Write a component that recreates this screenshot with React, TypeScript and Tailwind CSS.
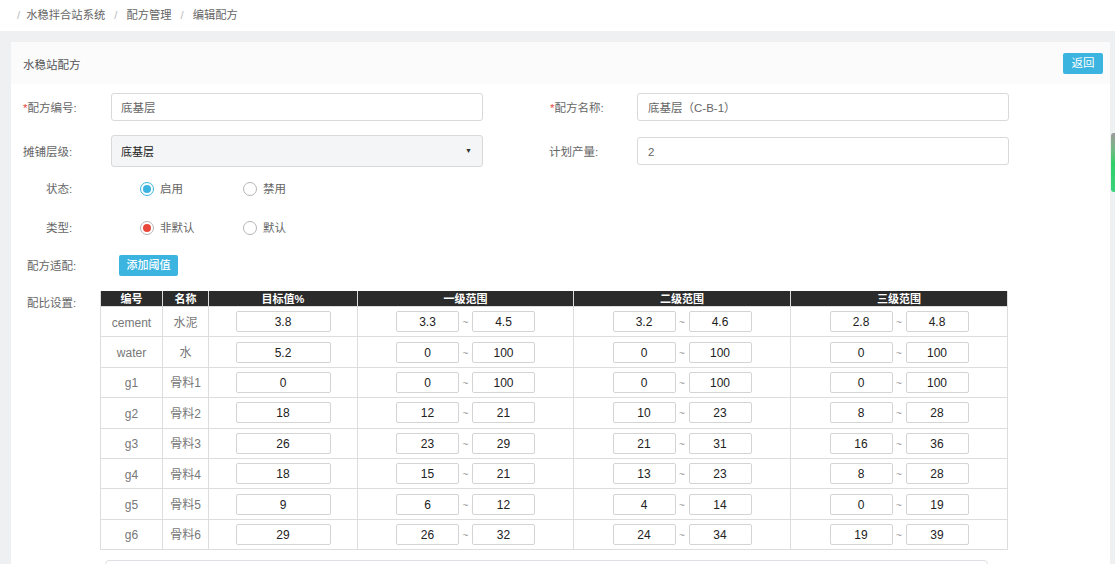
import React from "react";

const FONT = { fontFamily: '"Liberation Sans", "Noto Sans CJK SC", Arial, sans-serif' };

type Row = { code: string; name: string; target: string; r: [string, string][] };

const rows: Row[] = [
  { code: "cement", name: "水泥", target: "3.8", r: [["3.3", "4.5"], ["3.2", "4.6"], ["2.8", "4.8"]] },
  { code: "water", name: "水", target: "5.2", r: [["0", "100"], ["0", "100"], ["0", "100"]] },
  { code: "g1", name: "骨料1", target: "0", r: [["0", "100"], ["0", "100"], ["0", "100"]] },
  { code: "g2", name: "骨料2", target: "18", r: [["12", "21"], ["10", "23"], ["8", "28"]] },
  { code: "g3", name: "骨料3", target: "26", r: [["23", "29"], ["21", "31"], ["16", "36"]] },
  { code: "g4", name: "骨料4", target: "18", r: [["15", "21"], ["13", "23"], ["8", "28"]] },
  { code: "g5", name: "骨料5", target: "9", r: [["6", "12"], ["4", "14"], ["0", "19"]] },
  { code: "g6", name: "骨料6", target: "29", r: [["26", "32"], ["24", "34"], ["19", "39"]] },
];

function Cell({ v, w }: { v: string; w: string }) {
  return (
    <div
      className={`${w} h-[21px] border border-[#d4d4d4] rounded-[2px] bg-white flex items-center justify-center pt-[1px] text-[12px] text-[#222]`}
    >
      {v}
    </div>
  );
}

function Range({ a, b }: { a: string; b: string }) {
  return (
    <div className="flex items-center justify-center">
      <Cell v={a} w="w-[63px]" />
      <span className="w-[13px] text-center text-[10px] text-[#999] pt-[2px]">~</span>
      <Cell v={b} w="w-[63px]" />
    </div>
  );
}

function Radio({ checked, color, label }: { checked?: boolean; color?: string; label: string }) {
  return (
    <div className="flex items-center">
      <div
        className={`w-[14px] h-[14px] rounded-full border flex items-center justify-center bg-white ${
          checked && color === "blue" ? "border-[#3bb4e0]" : "border-[#b5b5b5]"
        }`}
      >
        {checked && (
          <div className={`w-[8px] h-[8px] rounded-full ${color === "blue" ? "bg-[#3bb4e0]" : "bg-[#e8473b]"}`} />
        )}
      </div>
      <span className="ml-[6px] pt-[2px] text-[11.5px] text-[#666]">{label}</span>
    </div>
  );
}

export default function App() {
  return (
    <div className="relative w-[1115px] h-[564px] overflow-hidden bg-[#eff0f2]" style={FONT}>
      {/* breadcrumb */}
      <div className="h-[31px] bg-white flex items-center pl-[17px] text-[11.3px] text-[#666]">
        <span className="text-[#bbb] mr-[6px]">/</span>
        <span>水稳拌合站系统</span>
        <span className="text-[#bbb] mx-[9px]">/</span>
        <span>配方管理</span>
        <span className="text-[#bbb] mx-[9px]">/</span>
        <span>编辑配方</span>
      </div>

      {/* card */}
      <div className="ml-[11px] mr-[5px] mt-[11px] bg-white h-[600px]">
        <div className="h-[42px] bg-[#fbfbfc] flex items-center justify-between pl-[12px] pr-[7px]">
          <span className="text-[11.5px] text-[#555] pt-[5px]">水稳站配方</span>
          <button className="w-[40px] h-[21px] bg-[#3bb4e0] text-white text-[11.5px] rounded-[2px] pt-[1px]">返回</button>
        </div>

        <div className="pt-[9px]">
          {/* row 1 */}
          <div className="flex items-center h-[28px]">
            <div className="w-[100px] pl-[12px] pt-[4px] text-[11.5px] text-[#666]">
              <span className="text-[#e8473b]">*</span>配方编号:
            </div>
            <div className="w-[372px] h-[28px] border border-[#d9d9d9] rounded-[3px] flex items-center pl-[9px] pt-[4px] text-[11.5px] text-[#666]">
              底基层
            </div>
            <div className="w-[67px]" />
            <div className="w-[87px] pt-[4px] text-[11.5px] text-[#666]">
              <span className="text-[#e8473b]">*</span>配方名称:
            </div>
            <div className="w-[372px] h-[28px] border border-[#d9d9d9] rounded-[3px] flex items-center pl-[10px] pt-[4px] text-[11.5px] text-[#666]">
              底基层（C-B-1）
            </div>
          </div>

          {/* row 2 */}
          <div className="flex items-center h-[32px] mt-[14px]">
            <div className="w-[100px] pl-[12px] pt-[4px] text-[11.5px] text-[#666]">摊铺层级:</div>
            <div className="w-[372px] h-[32px] border border-[#d9d9d9] rounded-[3px] bg-[#f4f5f6] flex items-center justify-between pl-[9px] pr-[10px] text-[11px] text-[#222]">
              <span className="pt-[3px]">底基层</span>
              <span className="text-[7px] text-[#333]">▼</span>
            </div>
            <div className="w-[66px]" />
            <div className="w-[88px] pt-[4px] text-[11.5px] text-[#666]">计划产量:</div>
            <div className="w-[372px] h-[28px] border border-[#d9d9d9] rounded-[3px] flex items-center pl-[10px] pt-[4px] text-[11.5px] text-[#666]">
              2
            </div>
          </div>

          {/* row 3 */}
          <div className="flex items-center h-[28px] mt-[8px]">
            <div className="w-[129px] pl-[35px] pt-[2px] text-[11.5px] text-[#666]">状态:</div>
            <div className="w-[103px]">
              <Radio checked color="blue" label="启用" />
            </div>
            <Radio label="禁用" />
          </div>

          {/* row 4 */}
          <div className="flex items-center h-[28px] mt-[11px]">
            <div className="w-[129px] pl-[35px] pt-[2px] text-[11.5px] text-[#666]">类型:</div>
            <div className="w-[103px]">
              <Radio checked color="red" label="非默认" />
            </div>
            <Radio label="默认" />
          </div>

          {/* row 5 */}
          <div className="flex items-center h-[22px] mt-[12px]">
            <div className="w-[108px] pl-[16px] pt-[4px] text-[11.5px] text-[#666]">配方适配:</div>
            <button className="w-[59px] h-[21px] bg-[#3bb4e0] text-white text-[11px] font-medium rounded-[2px] pt-[1px]">添加阈值</button>
          </div>

          {/* row 6 table */}
          <div className="flex mt-[15px]">
            <div className="w-[89px] pl-[16px] pt-[4px] text-[11.5px] text-[#666]">配比设置:</div>
            <div className="w-[907px]">
              <table className="border-collapse w-[907px] table-fixed">
                <colgroup>
                  <col className="w-[62px]" />
                  <col className="w-[46px]" />
                  <col className="w-[149px]" />
                  <col className="w-[216px]" />
                  <col className="w-[217px]" />
                  <col className="w-[217px]" />
                </colgroup>
                <thead>
                  <tr className="h-[15px] bg-[#2b2b2b] text-white text-[11px] font-bold">
                    <th className="border-x border-[#ddd] leading-[14px] pt-[1px] pb-0 px-0">编号</th>
                    <th className="border-x border-[#ddd] leading-[14px] pt-[1px] pb-0 px-0">名称</th>
                    <th className="border-x border-[#ddd] leading-[14px] pt-[1px] pb-0 px-0">目标值%</th>
                    <th className="border-x border-[#ddd] leading-[14px] pt-[1px] pb-0 px-0">一级范围</th>
                    <th className="border-x border-[#ddd] leading-[14px] pt-[1px] pb-0 px-0">二级范围</th>
                    <th className="border-x border-[#ddd] leading-[14px] pt-[1px] pb-0 px-0">三级范围</th>
                  </tr>
                </thead>
                <tbody>
                  {rows.map((r) => (
                    <tr key={r.code} className="h-[30.4px] text-[12px] text-[#777]">
                      <td className="border border-[#ddd] text-center pt-[2px] pb-0 px-0">{r.code}</td>
                      <td className="border border-[#ddd] text-center pt-[2px] pb-0 px-0">{r.name}</td>
                      <td className="border border-[#ddd] p-0">
                        <div className="flex justify-center">
                          <Cell v={r.target} w="w-[95px]" />
                        </div>
                      </td>
                      {r.r.map((x, i) => (
                        <td key={i} className="border border-[#ddd] p-0">
                          <Range a={x[0]} b={x[1]} />
                        </td>
                      ))}
                    </tr>
                  ))}
                </tbody>
              </table>
            </div>
          </div>

          {/* partially visible box below */}
          <div className="ml-[94px] w-[883px] h-[40px] mt-[10px] border border-[#dcdfe3] rounded-[4px]" />
        </div>
      </div>

      {/* floating right tab */}
      <div className="absolute right-0 top-[133px] w-[4px] h-[59px] rounded-tl-[3px] rounded-bl-[3px] bg-gradient-to-b from-[#9a9a9a] via-[#2fcf6a] to-[#3ad27a]" />
    </div>
  );
}
